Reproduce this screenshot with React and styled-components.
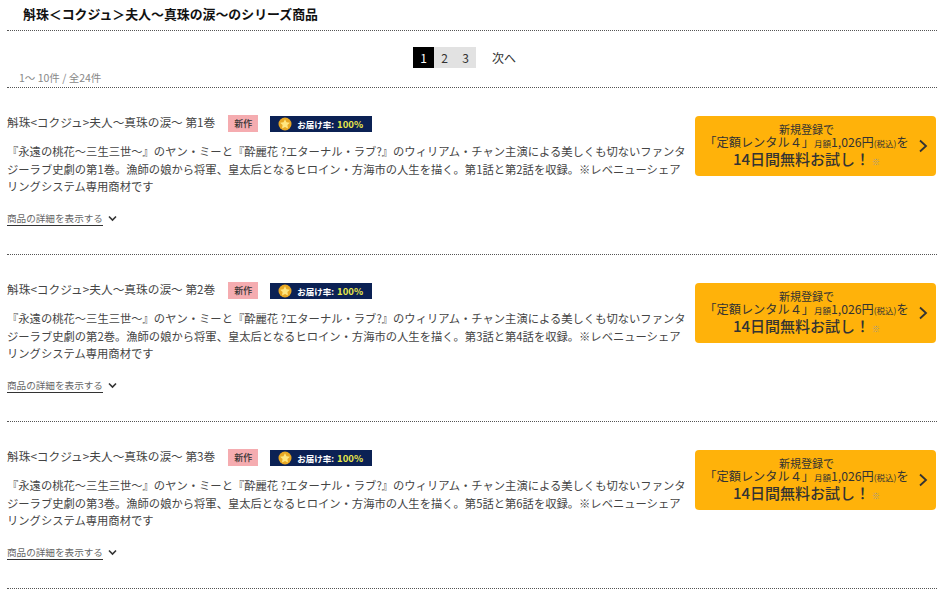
import React from 'react'
import styled, { createGlobalStyle } from 'styled-components'

const GlobalStyle = createGlobalStyle`
  html, body {
    margin: 0;
    padding: 0;
    background: #fff;
    overflow: hidden;
  }
  body {
    font-family: "Noto Sans CJK JP", "Liberation Sans", sans-serif;
    color: #333;
  }
`

const items = [
  { vol: 1, eps: '第1話と第2話' },
  { vol: 2, eps: '第3話と第4話' },
  { vol: 3, eps: '第5話と第6話' },
]

const Star = () => (
  <svg width="14" height="14" viewBox="0 0 14 14">
    <circle cx="7" cy="7" r="6.5" fill="#e8a824" />
    <path d="M7 2.2l1.5 3.1 3.4.5-2.5 2.3.6 3.4L7 10l-3 1.5.6-3.4L2.100 5.800l3.400-.5z" fill="#ffe680" />
  </svg>
)

const App = () => {
  return (
    <Page>
      <GlobalStyle />
      <Heading>斛珠＜コクジュ＞夫人〜真珠の涙〜のシリーズ商品</Heading>
      <Pager>
        <PageNum active>1</PageNum>
        <PageNum>2</PageNum>
        <PageNum>3</PageNum>
        <NextLink>次へ</NextLink>
      </Pager>
      <Count>1〜 10件 / 全24件</Count>
      {items.map(item => (
        <Item key={item.vol}>
          <Info>
            <TitleRow>
              <Title>斛珠&lt;コクジュ&gt;夫人〜真珠の涙〜 第{item.vol}巻</Title>
              <NewBadge>新作</NewBadge>
              <RateBadge>
                <Star />
                <RateLabel>お届け率:</RateLabel>
                <RateValue>100%</RateValue>
              </RateBadge>
            </TitleRow>
            <Desc>
              『永遠の桃花〜三生三世〜』のヤン・ミーと『酔麗花 ?エターナル・ラブ?』のウィリアム・チャン主演による美しくも切ないファンタジーラブ史劇の第{item.vol}巻。漁師の娘から将軍、皇太后となるヒロイン・方海市の人生を描く。{item.eps}を収録。※レベニューシェアリングシステム専用商材です
            </Desc>
            <DetailRow>
              <DetailLink>商品の詳細を表示する</DetailLink>
              <svg width="9" height="7" viewBox="0 0 9 7">
                <path d="M1 1.500l3.500 3.500L8 1.500" fill="none" stroke="#333" strokeWidth="1.600" />
              </svg>
            </DetailRow>
          </Info>
          <Cta>
            <CtaText>
              <CtaTop>新規登録で</CtaTop>
              <CtaMid>
                「定額レンタル４」<Small>月額</Small>1,026円<Small>(税込)</Small>を
              </CtaMid>
              <CtaBig>
                14日間無料お試し！<Note>※</Note>
              </CtaBig>
            </CtaText>
            <svg width="10" height="14" viewBox="0 0 10 14">
              <path d="M2 1.500L8 7l-6 5.500" fill="none" stroke="#333" strokeWidth="1.800" />
            </svg>
          </Cta>
        </Item>
      ))}
    </Page>
  )
}

export default App

const Page = styled.div`
  width: 949px;
  height: 595px;
  padding: 0 12px 0 7px;
  box-sizing: border-box;
  overflow: hidden;
`
const Heading = styled.h2`
  margin: 0;
  height: 30px;
  padding-left: 16px;
  font-size: 12.900px;
  font-weight: 700;
  line-height: 28px;
  color: #111;
  border-bottom: 1px dotted #555;
`
const Pager = styled.div`
  display: flex;
  justify-content: center;
  align-items: center;
  height: 21px;
  margin-top: 16px;
  padding-right: 15px;
`
const PageNum = styled.span`
  width: 21px;
  height: 21px;
  font-size: 12px;
  line-height: 21px;
  text-align: center;
  background: ${props => (props.active ? '#000' : '#e2e2e2')};
  color: ${props => (props.active ? '#fff' : '#333')};
`
const NextLink = styled.span`
  margin-left: 16px;
  font-size: 12px;
  color: #333;
`
const Count = styled.div`
  height: 19px;
  padding-left: 12px;
  font-size: 10.500px;
  line-height: 20px;
  color: #888;
  border-bottom: 1px dotted #555;
`
const Item = styled.div`
  display: flex;
  justify-content: space-between;
  height: 166px;
  border-bottom: 1px dotted #555;
`
const Info = styled.div`
  width: 682px;
`
const TitleRow = styled.div`
  display: flex;
  align-items: center;
  height: 17px;
  margin-top: 27px;
`
const Title = styled.span`
  padding-bottom: 3px;
  font-size: 11.700px;
  line-height: 14px;
  color: #444;
  white-space: nowrap;
`
const NewBadge = styled.span`
  width: 30px;
  height: 17px;
  margin-left: 13px;
  font-size: 9px;
  font-weight: 500;
  line-height: 17px;
  text-align: center;
  background: #f5acb0;
  color: #333;
`
const RateBadge = styled.span`
  display: flex;
  align-items: center;
  width: 102px;
  height: 16px;
  margin-left: 12px;
  padding-left: 8px;
  box-sizing: border-box;
  background: #0b2154;
`
const RateLabel = styled.span`
  margin-left: 5px;
  font-size: 8.500px;
  font-weight: 700;
  color: #fff;
`
const RateValue = styled.span`
  margin-left: 3px;
  font-size: 9.500px;
  font-weight: 700;
  color: #e8e84a;
`
const Desc = styled.p`
  margin: 11px 0 0;
  font-size: 11.300px;
  line-height: 17.500px;
  color: #444;
`
const DetailRow = styled.div`
  display: flex;
  align-items: center;
  gap: 5px;
  margin-top: 15px;
`
const DetailLink = styled.span`
  font-size: 9.600px;
  line-height: 14px;
  color: #666;
  border-bottom: 1px solid #333;
`
const Cta = styled.div`
  display: flex;
  align-items: center;
  flex: none;
  width: 241px;
  height: 60px;
  margin: 28px 1px 0 0;
  padding-right: 8px;
  box-sizing: border-box;
  border-radius: 4px;
  background: #ffb20a;
`
const CtaText = styled.div`
  flex: 1;
  text-align: center;
  color: #333;
`
const CtaTop = styled.div`
  font-size: 11px;
  line-height: 13px;
  white-space: nowrap;
`
const CtaMid = styled.div`
  font-size: 12.200px;
  line-height: 13px;
  white-space: nowrap;
`
const Small = styled.span`
  font-size: 8.500px;
`
const CtaBig = styled.div`
  font-size: 15px;
  font-weight: 500;
  line-height: 15px;
  margin-top: 1px;
  white-space: nowrap;
`
const Note = styled.span`
  margin-left: 2px;
  font-size: 8px;
  font-weight: 400;
  color: #999;
`
